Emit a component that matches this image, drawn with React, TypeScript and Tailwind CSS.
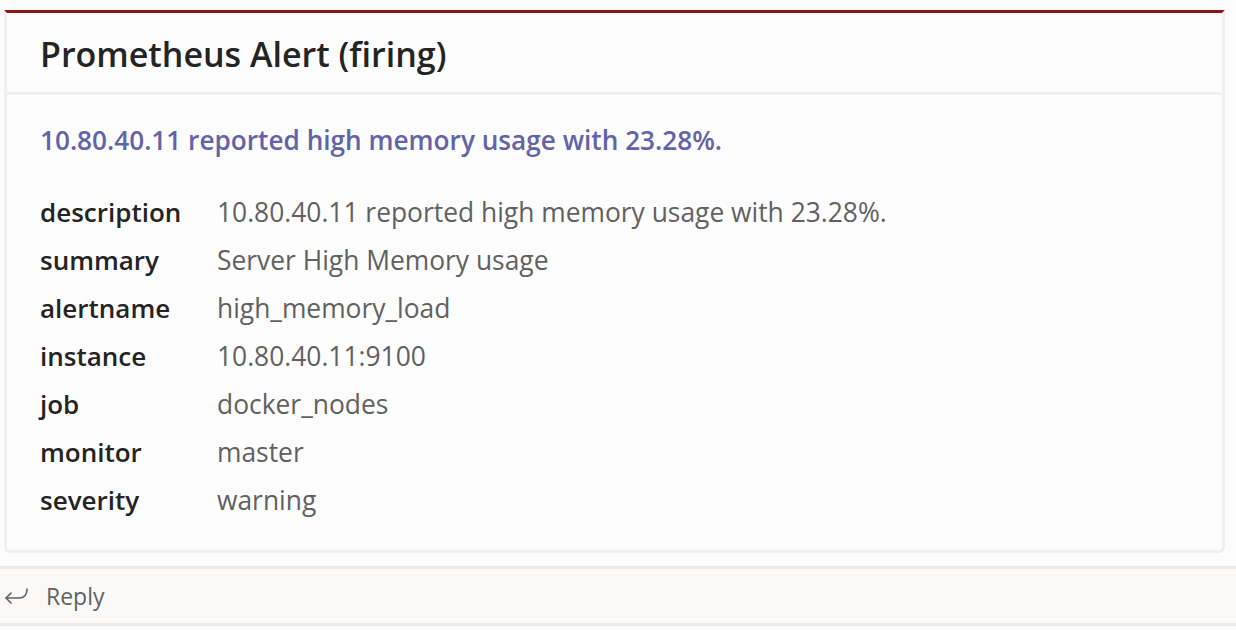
const rows: [string, string][] = [
  ["description", "10.80.40.11 reported high memory usage with 23.28%."],
  ["summary", "Server High Memory usage"],
  ["alertname", "high_memory_load"],
  ["instance", "10.80.40.11:9100"],
  ["job", "docker_nodes"],
  ["monitor", "master"],
  ["severity", "warning"],
];

export default function App() {
  return (
    <div className="h-[630px] w-[1236px] overflow-hidden bg-[#fcfcfc] pt-[10px] font-['Open_Sans','Noto_Sans',sans-serif]">
      {/* card */}
      <div className="mx-[4px] w-[1221px] rounded-b-[6px] border-x-[3px] border-b-[3px] border-t-[3px] border-[#f0f0f0] border-t-[#8c1719] bg-[#fdfdfd]">
        <div className="flex h-[82px] items-center border-b-[3px] border-[#f0f0f0] pl-[33px] pt-[2px]">
          <h1 className="text-[34px] font-semibold leading-none text-[#242424]">
            Prometheus Alert (firing)
          </h1>
        </div>

        <div className="px-[33px] pb-[34px] pt-[29px]">
          <p className="text-[26.2px] font-semibold leading-[32px] text-[#6264a7]">
            10.80.40.11 reported high memory usage with 23.28%.
          </p>
          <div className="mt-[40px] grid grid-cols-[177px_1fr] gap-y-[16px] text-[26px] leading-[32px]">
            {rows.map(([k, v]) => (
              <div key={k} className="contents">
                <span className="font-semibold text-[#242424]">{k}</span>
                <span className="text-[26.4px] text-[#616161]">{v}</span>
              </div>
            ))}
          </div>
        </div>
      </div>

      {/* reply bar */}
      <div className="mt-[13px] flex h-[60px] items-center gap-[16px] border-y-[3px] border-[#ececec] bg-[#faf9f8] pl-[4px]">
        <svg width="26" height="20" viewBox="0 0 26 20" fill="none" stroke="#616161" strokeWidth="1.6" strokeLinecap="round" strokeLinejoin="round">
          <path d="M23 3c0 6-3 9-8 9H2" />
          <path d="M7 7l-5 5 5 5" />
        </svg>
        <span className="text-[23px] leading-none text-[#616161]">Reply</span>
      </div>
    </div>
  );
}
